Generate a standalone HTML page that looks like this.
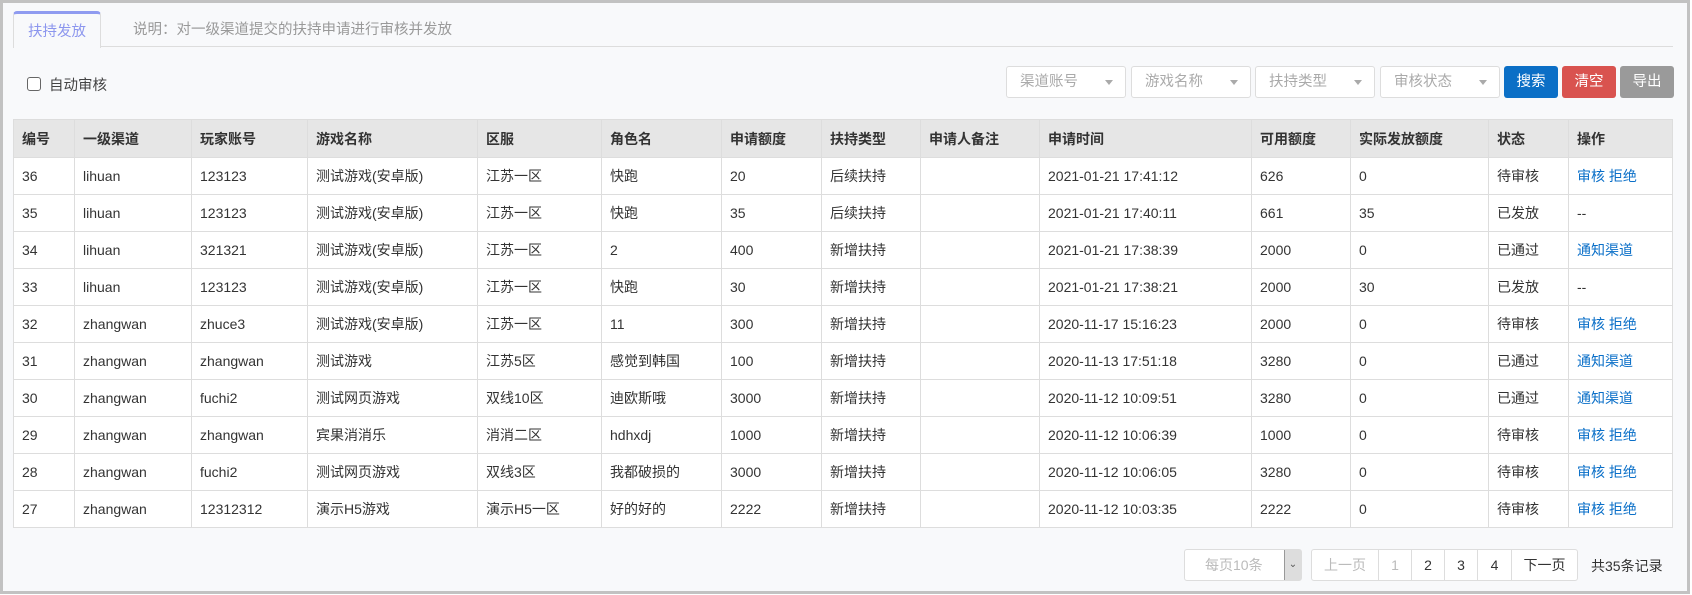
<!DOCTYPE html>
<html><head><meta charset="utf-8"><style>
*{box-sizing:border-box;margin:0;padding:0}
body{width:1692px;height:595px;background:#fff;font-family:"Liberation Sans","Noto Sans CJK SC",sans-serif;font-size:14px;color:#333;position:relative;overflow:hidden}
.frame{position:absolute;left:0;top:0;width:1690px;height:594px;border:3px solid #c2c2c2;background:#f8f9fb}
.abs{position:absolute}
.tab{left:13px;top:11px;width:88px;height:37px;border:1px solid #ddd;border-top:3px solid #8f9bf0;border-bottom:none;border-radius:4px 4px 0 0;background:#f8f9fb;color:#8c96ee;text-align:center;line-height:36px;font-size:14.5px}
.line{left:100px;top:46px;width:1573px;height:1px;background:#ddd}
.desc{left:133px;top:18px;color:#999;font-size:14.5px}
.cb{left:27px;top:77px;width:14px;height:14px;border:1px solid #666;border-radius:3px;background:#fff}
.cbl{left:49px;top:74px;font-size:14.5px;color:#444}
.sel{top:66px;width:82px;height:32px;border:1px solid #ddd;border-radius:3px;background:#fff;color:#aaa;padding-left:13px;line-height:30px;font-size:14.5px}
.sel:after{content:"";position:absolute;right:12px;top:13px;border:4px solid transparent;border-top:5px solid #aaa}
.btn{top:66px;width:54px;height:32px;border-radius:3px;color:#fff;text-align:center;line-height:32px;font-size:14.5px}
table{position:absolute;left:13px;top:119px;border-collapse:collapse;background:#fff;table-layout:fixed}
td,th{border:1px solid #ddd;height:37px;padding-left:8px;text-align:left;font-size:14px;white-space:nowrap;overflow:hidden}
th{background:#e6e6e6;height:38px;font-weight:bold;color:#333}
a{color:#0a6fc8;text-decoration:none}
.pg{top:549px;height:32px;border:1px solid #ddd;background:#fff;text-align:center;line-height:30px;font-size:14px}
</style></head><body>
<div class="frame"></div>
<div class="abs tab">扶持发放</div>
<div class="abs line"></div>
<div class="abs desc">说明：对一级渠道提交的扶持申请进行审核并发放</div>
<div class="abs cb"></div>
<div class="abs cbl">自动审核</div>
<div class="abs sel" style="left:1006px;width:120px">渠道账号</div>
<div class="abs sel" style="left:1131px;width:120px">游戏名称</div>
<div class="abs sel" style="left:1255px;width:120px">扶持类型</div>
<div class="abs sel" style="left:1380px;width:120px">审核状态</div>
<div class="abs btn" style="left:1504px;background:#0b6fc6">搜索</div>
<div class="abs btn" style="left:1562px;background:#d9534f">清空</div>
<div class="abs btn" style="left:1620px;background:#9a9a9a">导出</div>
<table>
<colgroup><col width="61"><col width="117"><col width="116"><col width="170"><col width="124"><col width="120"><col width="100"><col width="99"><col width="119"><col width="212"><col width="99"><col width="138"><col width="80"><col width="104"></colgroup>
<tr><th>编号</th><th>一级渠道</th><th>玩家账号</th><th>游戏名称</th><th>区服</th><th>角色名</th><th>申请额度</th><th>扶持类型</th><th>申请人备注</th><th>申请时间</th><th>可用额度</th><th>实际发放额度</th><th>状态</th><th>操作</th></tr>
<tr><td>36</td><td>lihuan</td><td>123123</td><td>测试游戏(安卓版)</td><td>江苏一区</td><td>快跑</td><td>20</td><td>后续扶持</td><td></td><td>2021-01-21 17:41:12</td><td>626</td><td>0</td><td>待审核</td><td><a>审核 拒绝</a></td></tr>
<tr><td>35</td><td>lihuan</td><td>123123</td><td>测试游戏(安卓版)</td><td>江苏一区</td><td>快跑</td><td>35</td><td>后续扶持</td><td></td><td>2021-01-21 17:40:11</td><td>661</td><td>35</td><td>已发放</td><td>--</td></tr>
<tr><td>34</td><td>lihuan</td><td>321321</td><td>测试游戏(安卓版)</td><td>江苏一区</td><td>2</td><td>400</td><td>新增扶持</td><td></td><td>2021-01-21 17:38:39</td><td>2000</td><td>0</td><td>已通过</td><td><a>通知渠道</a></td></tr>
<tr><td>33</td><td>lihuan</td><td>123123</td><td>测试游戏(安卓版)</td><td>江苏一区</td><td>快跑</td><td>30</td><td>新增扶持</td><td></td><td>2021-01-21 17:38:21</td><td>2000</td><td>30</td><td>已发放</td><td>--</td></tr>
<tr><td>32</td><td>zhangwan</td><td>zhuce3</td><td>测试游戏(安卓版)</td><td>江苏一区</td><td>11</td><td>300</td><td>新增扶持</td><td></td><td>2020-11-17 15:16:23</td><td>2000</td><td>0</td><td>待审核</td><td><a>审核 拒绝</a></td></tr>
<tr><td>31</td><td>zhangwan</td><td>zhangwan</td><td>测试游戏</td><td>江苏5区</td><td>感觉到韩国</td><td>100</td><td>新增扶持</td><td></td><td>2020-11-13 17:51:18</td><td>3280</td><td>0</td><td>已通过</td><td><a>通知渠道</a></td></tr>
<tr><td>30</td><td>zhangwan</td><td>fuchi2</td><td>测试网页游戏</td><td>双线10区</td><td>迪欧斯哦</td><td>3000</td><td>新增扶持</td><td></td><td>2020-11-12 10:09:51</td><td>3280</td><td>0</td><td>已通过</td><td><a>通知渠道</a></td></tr>
<tr><td>29</td><td>zhangwan</td><td>zhangwan</td><td>宾果消消乐</td><td>消消二区</td><td>hdhxdj</td><td>1000</td><td>新增扶持</td><td></td><td>2020-11-12 10:06:39</td><td>1000</td><td>0</td><td>待审核</td><td><a>审核 拒绝</a></td></tr>
<tr><td>28</td><td>zhangwan</td><td>fuchi2</td><td>测试网页游戏</td><td>双线3区</td><td>我都破损的</td><td>3000</td><td>新增扶持</td><td></td><td>2020-11-12 10:06:05</td><td>3280</td><td>0</td><td>待审核</td><td><a>审核 拒绝</a></td></tr>
<tr><td>27</td><td>zhangwan</td><td>12312312</td><td>演示H5游戏</td><td>演示H5一区</td><td>好的好的</td><td>2222</td><td>新增扶持</td><td></td><td>2020-11-12 10:03:35</td><td>2222</td><td>0</td><td>待审核</td><td><a>审核 拒绝</a></td></tr>
</table>
<div class="abs pg" style="left:1184px;width:118px;border-radius:3px;color:#bbb;text-align:left;padding-left:20px">每页10条<span style="position:absolute;right:0;top:0;width:17px;height:30px;background:#ddd;border-left:1px solid #999;color:#555;font-size:10px;text-align:center">⌄</span></div>
<div class="abs pg" style="left:1311px;width:68px;color:#bbb;border-radius:3px 0 0 3px">上一页</div>
<div class="abs pg" style="left:1378px;width:34px;color:#bbb">1</div>
<div class="abs pg" style="left:1411px;width:34px">2</div>
<div class="abs pg" style="left:1444px;width:34px">3</div>
<div class="abs pg" style="left:1477px;width:35px">4</div>
<div class="abs pg" style="left:1511px;width:67px;border-radius:0 3px 3px 0">下一页</div>
<div class="abs" style="left:1591px;top:556px;font-size:14px">共35条记录</div>
</body></html>
